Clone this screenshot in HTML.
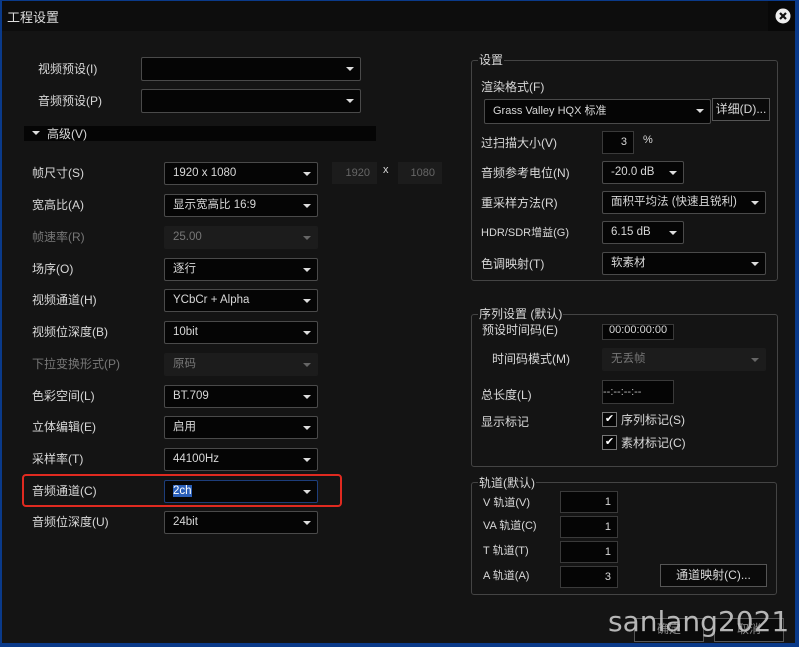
<!DOCTYPE html>
<html><head><meta charset="utf-8"><style>
*{margin:0;padding:0;box-sizing:border-box}
body{width:799px;height:647px;background:#0a3a8a;overflow:hidden;font-family:"Liberation Sans","Noto Sans CJK SC",sans-serif;font-size:12px;color:#d8d8d8;position:relative}
#win{position:absolute;left:2px;top:1px;width:793px;height:642px;background:#141414}
#title{position:absolute;left:0;top:0;width:793px;height:30px;background:#0d0d0d}
.a{position:absolute;white-space:nowrap}
.l{margin-top:-2px}
.dd{position:absolute;height:23px;background:#050505;border:1px solid #4a4a4a;border-radius:2px;padding-left:8px;line-height:21px;font-size:11.5px}
.dd:after{content:"";position:absolute;right:6px;top:9px;border-left:4px solid transparent;border-right:4px solid transparent;border-top:4px solid #ddd}
.dis{background:#1c1c1c;border-color:#1c1c1c;color:#777}
.dis:after{border-top-color:#666}
.tb{position:absolute;height:22px;background:#050505;border:1px solid #3a3a3a;text-align:right;padding-right:6px;line-height:20px;font-size:11px}
.gb{position:absolute;border:1px solid #444;border-radius:3px}
.gt{position:absolute;background:#141414;padding:0 1px;font-size:12px;line-height:14px}
.cb{position:absolute;width:15px;height:15px;border:1px solid #777;background:#050505;color:#fff;font-size:11px;line-height:13px;text-align:center}
.btn{position:absolute;height:22px;border:1px solid #555;background:#0a0a0a;text-align:center;line-height:20px}
</style></head><body>
<div id="win">
<div id="title"><span class="a" style="left:5px;top:6px;font-size:13px;color:#ddd">工程设置</span>
<div class="a" style="left:766px;top:0;width:27px;height:30px;background:#080808"></div>
<svg class="a" style="left:773px;top:7px" width="16" height="16"><circle cx="8" cy="8" r="7.5" fill="#eee"/><path d="M5 5L11 11M11 5L5 11" stroke="#111" stroke-width="2.2"/></svg>
</div>
</div>
<span class="a l" style="left:38px;top:62px">视频预设(I)</span>
<div class="dd" style="left:141px;top:57px;width:220px;height:24px"></div>
<span class="a l" style="left:38px;top:94px">音频预设(P)</span>
<div class="dd" style="left:141px;top:89px;width:220px;height:24px"></div>
<div class="a" style="left:24px;top:126px;width:352px;height:15px;background:#050505"></div>
<svg class="a" style="left:32px;top:130px" width="8" height="6"><path d="M0 1H8L4 5Z" fill="#ddd"/></svg>
<span class="a l" style="left:47px;top:127px">高级(V)</span>

<span class="a l" style="left:32px;top:166px">帧尺寸(S)</span><div class="dd" style="left:164px;top:162px;width:154px">1920 x 1080</div>
<div class="tb" style="left:332px;top:162px;width:45px;background:#1c1c1c;border-color:#1c1c1c;color:#666">1920</div>
<span class="a l" style="left:383px;top:166px;font-size:11px">x</span>
<div class="tb" style="left:398px;top:162px;width:44px;background:#1c1c1c;border-color:#1c1c1c;color:#666">1080</div>
<span class="a l" style="left:32px;top:198px">宽高比(A)</span><div class="dd" style="left:164px;top:194px;width:154px">显示宽高比 16:9</div>
<span class="a l" style="left:32px;top:230px;color:#777">帧速率(R)</span><div class="dd dis" style="left:164px;top:226px;width:154px">25.00</div>
<span class="a l" style="left:32px;top:262px">场序(O)</span><div class="dd" style="left:164px;top:258px;width:154px">逐行</div>
<span class="a l" style="left:32px;top:293px">视频通道(H)</span><div class="dd" style="left:164px;top:289px;width:154px">YCbCr + Alpha</div>
<span class="a l" style="left:32px;top:325px">视频位深度(B)</span><div class="dd" style="left:164px;top:321px;width:154px">10bit</div>
<span class="a l" style="left:32px;top:357px;color:#777">下拉变换形式(P)</span><div class="dd dis" style="left:164px;top:353px;width:154px">原码</div>
<span class="a l" style="left:32px;top:389px">色彩空间(L)</span><div class="dd" style="left:164px;top:385px;width:154px">BT.709</div>
<span class="a l" style="left:32px;top:420px">立体编辑(E)</span><div class="dd" style="left:164px;top:416px;width:154px">启用</div>
<span class="a l" style="left:32px;top:452px">采样率(T)</span><div class="dd" style="left:164px;top:448px;width:154px">44100Hz</div>
<div class="a" style="left:22px;top:474px;width:320px;height:33px;border:2px solid #e02a20;border-radius:4px"></div>
<span class="a l" style="left:32px;top:484px">音频通道(C)</span><div class="dd" style="left:164px;top:480px;width:154px;border-color:#1d3d7a"><span style="background:#2a5fb8;color:#fff">2ch</span></div>
<span class="a l" style="left:32px;top:515px">音频位深度(U)</span><div class="dd" style="left:164px;top:511px;width:154px">24bit</div>

<div class="gb" style="left:471px;top:60px;width:307px;height:221px"></div>
<span class="gt" style="left:478px;top:53px">设置</span>
<span class="a l" style="left:481px;top:80px">渲染格式(F)</span>
<div class="dd" style="left:484px;top:99px;width:227px;height:25px;font-size:11px;line-height:23px">Grass Valley HQX 标准</div>
<div class="btn" style="left:712px;top:98px;width:58px;height:23px">详细(D)...</div>
<span class="a l" style="left:481px;top:136px">过扫描大小(V)</span>
<div class="tb" style="left:602px;top:131px;width:32px;height:23px">3</div><span class="a l" style="left:643px;top:136px;font-size:11px">%</span>
<span class="a l" style="left:481px;top:166px">音频参考电位(N)</span><div class="dd" style="left:602px;top:161px;width:82px;padding-left:8px">-20.0 dB</div>
<span class="a l" style="left:481px;top:196px">重采样方法(R)</span><div class="dd" style="left:602px;top:191px;width:164px">面积平均法 (快速且锐利)</div>
<span class="a l" style="left:481px;top:226px;font-size:11px">HDR/SDR增益(G)</span><div class="dd" style="left:602px;top:221px;width:82px">6.15 dB</div>
<span class="a l" style="left:481px;top:257px">色调映射(T)</span><div class="dd" style="left:602px;top:252px;width:164px">软素材</div>

<div class="gb" style="left:471px;top:314px;width:307px;height:153px"></div>
<span class="gt" style="left:478px;top:307px">序列设置 (默认)</span>
<span class="a l" style="left:482px;top:323px">预设时间码(E)</span>
<div class="tb" style="left:602px;top:324px;width:72px;height:16px;text-align:left;padding-left:6px;line-height:10px">00:00:00:00</div>
<span class="a l" style="left:492px;top:352px">时间码模式(M)</span><div class="dd dis" style="left:602px;top:348px;width:164px">无丢帧</div>
<span class="a l" style="left:481px;top:388px">总长度(L)</span>
<div class="tb" style="left:602px;top:380px;width:72px;height:24px;text-align:left;line-height:22px;color:#bbb">--:--:--:--</div>
<span class="a l" style="left:481px;top:415px">显示标记</span>
<div class="cb" style="left:602px;top:412px">✔</div><span class="a l" style="left:621px;top:413px">序列标记(S)</span>
<div class="cb" style="left:602px;top:435px">✔</div><span class="a l" style="left:621px;top:436px">素材标记(C)</span>

<div class="gb" style="left:471px;top:482px;width:306px;height:113px"></div>
<span class="gt" style="left:478px;top:476px">轨道(默认)</span>
<span class="a l" style="left:483px;top:496px;font-size:11px">V 轨道(V)</span><div class="tb" style="left:560px;top:491px;width:58px">1</div>
<span class="a l" style="left:483px;top:519px;font-size:11px">VA 轨道(C)</span><div class="tb" style="left:560px;top:516px;width:58px">1</div>
<span class="a l" style="left:483px;top:544px;font-size:11px">T 轨道(T)</span><div class="tb" style="left:560px;top:541px;width:58px">1</div>
<span class="a l" style="left:483px;top:569px;font-size:11px">A 轨道(A)</span><div class="tb" style="left:560px;top:566px;width:58px">3</div>
<div class="btn" style="left:660px;top:564px;width:107px;height:23px">通道映射(C)...</div>

<div class="btn" style="left:634px;top:618px;width:70px;height:24px;color:#888">确定</div>
<div class="btn" style="left:714px;top:618px;width:70px;height:24px;color:#888">取消</div>
<span class="a" style="left:608px;top:605px;font-size:28px;color:#c8c8c8;font-family:'DejaVu Sans',sans-serif;opacity:.9">sanlang2021</span>
</body></html>
